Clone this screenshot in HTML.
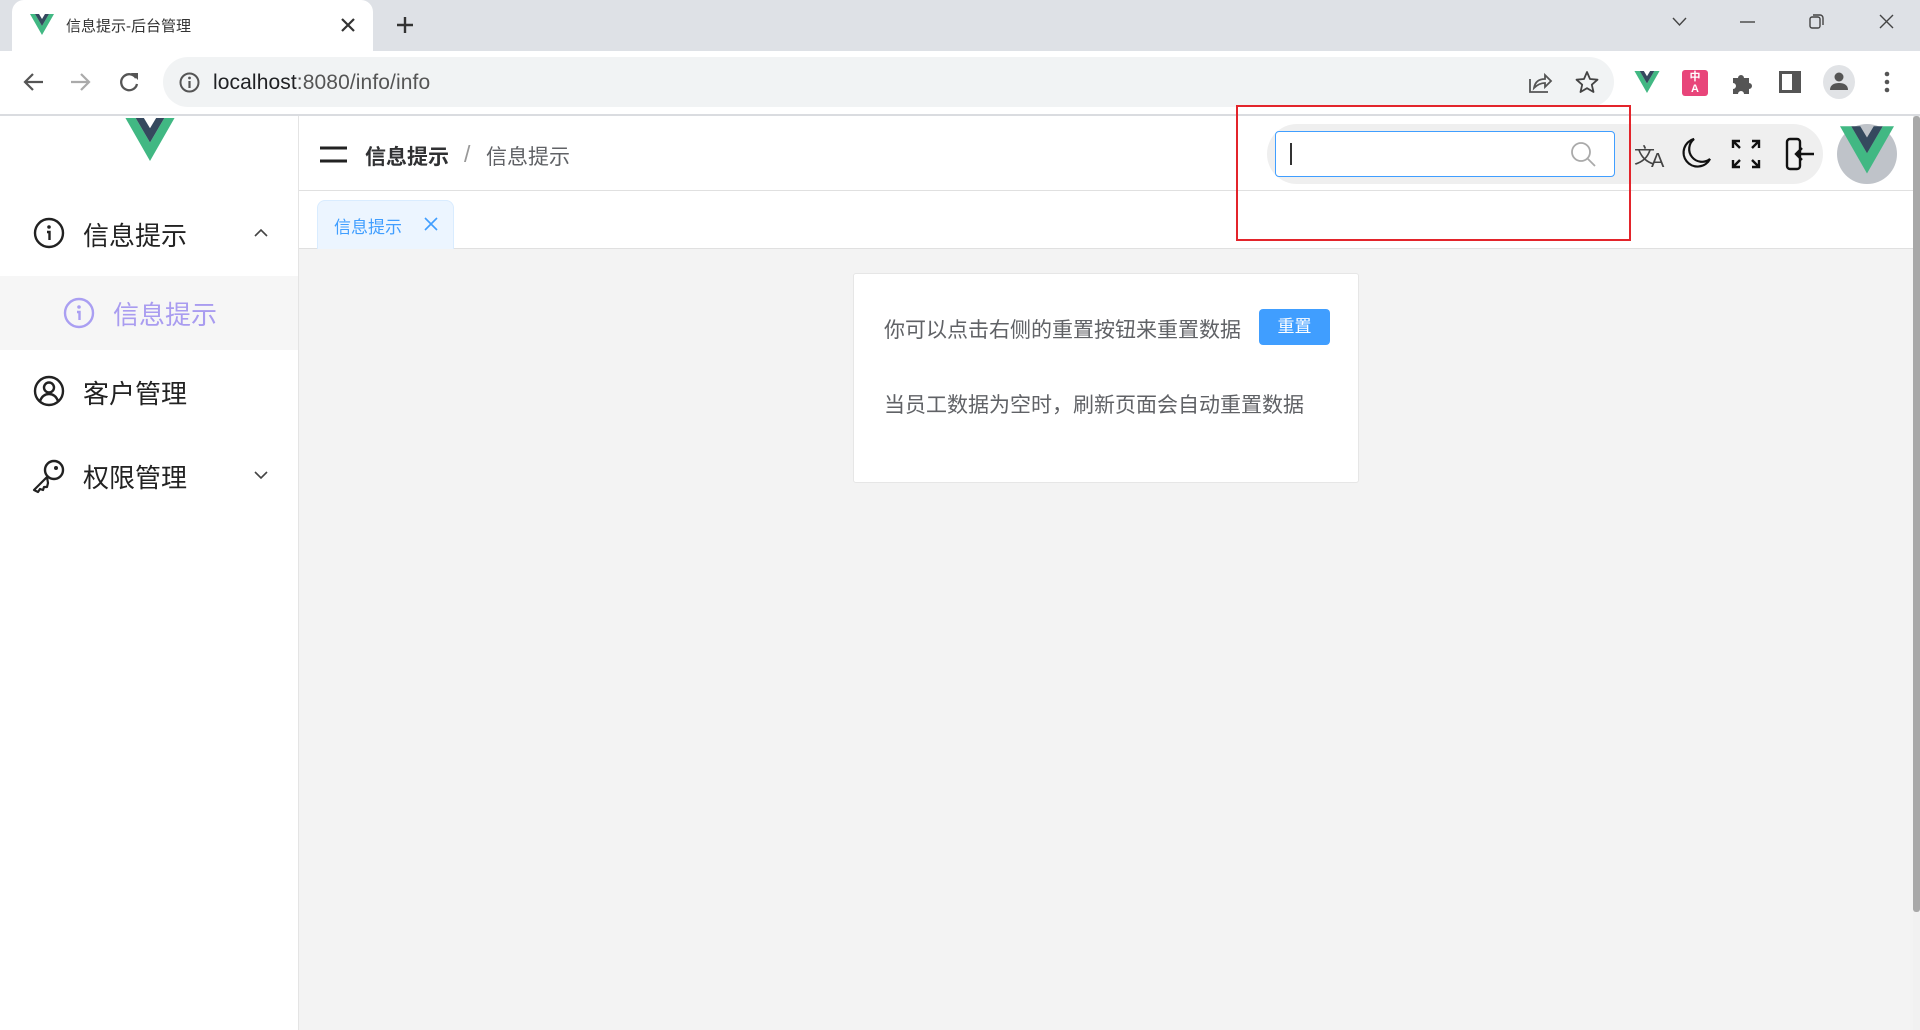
<!DOCTYPE html>
<html><head><meta charset="utf-8"><style>
*{margin:0;padding:0;box-sizing:border-box}
body{width:1920px;height:1030px;overflow:hidden;font-family:"Liberation Sans","Noto Sans CJK SC",sans-serif;background:#fff;position:relative}
.a{position:absolute}
svg{position:absolute;overflow:visible}
</style></head><body>
<div class="a" style="left:0;top:0;width:1920px;height:51px;background:#dee1e6"></div>
<div class="a" style="left:12px;top:0;width:361px;height:52px;background:#fff;border-radius:12px 12px 0 0"></div>
<svg style="left:30px;top:14px" width="24" height="22" viewBox="0 0 24 22"><path d="M0 0h5l7 12 7-12h5L12 21z" fill="#41b883"/><path d="M5 0h4l3 5 3-5h4l-7 12z" fill="#35495e"/></svg>
<div class="a" style="left:66px;top:15px;font-size:15px;color:#333">信息提示-后台管理</div>
<svg style="left:341px;top:18px" width="14" height="14"><path d="M1 1l12 12M13 1L1 13" stroke="#333" stroke-width="2.2"/></svg>
<svg style="left:396px;top:16px" width="18" height="18"><path d="M9 1v16M1 9h16" stroke="#333" stroke-width="2.4"/></svg>
<svg style="left:1672px;top:17px" width="15" height="9"><path d="M1 1l6.5 7L14 1" stroke="#444" fill="none" stroke-width="1.4"/></svg>
<svg style="left:1740px;top:21px" width="15" height="2"><path d="M0 1h15" stroke="#444" stroke-width="1.4"/></svg>
<svg style="left:1809px;top:14px" width="15" height="15"><rect x="1" y="3" width="10" height="11" rx="2" fill="none" stroke="#444" stroke-width="1.4"/><path d="M4 1h7a3 3 0 0 1 3 3v7" fill="none" stroke="#444" stroke-width="1.4"/></svg>
<svg style="left:1879px;top:14px" width="15" height="15"><path d="M1 1l13 13M14 1L1 14" stroke="#444" stroke-width="1.4"/></svg>
<svg style="left:22px;top:72px" width="22" height="20"><path d="M21 10H3M11 2l-8 8 8 8" stroke="#555" fill="none" stroke-width="2.2"/></svg>
<svg style="left:70px;top:72px" width="22" height="20"><path d="M1 10h18M11 2l8 8-8 8" stroke="#aaa" fill="none" stroke-width="2.2"/></svg>
<svg style="left:118px;top:71px" width="22" height="22"><path d="M18 7A8 8 0 1 0 19 13" stroke="#555" fill="none" stroke-width="2.3"/><path d="M13 2h7v7z" fill="#555"/></svg>
<div class="a" style="left:163px;top:57px;width:1451px;height:50px;background:#f1f3f4;border-radius:25px"></div>
<svg style="left:179px;top:72px" width="21" height="21"><circle cx="10.5" cy="10.5" r="9" fill="none" stroke="#555" stroke-width="2"/><path d="M10.5 9v7" stroke="#555" stroke-width="2.2"/><circle cx="10.5" cy="6" r="1.4" fill="#555"/></svg>
<div class="a" style="left:213px;top:71px;font-size:21px;color:#202124;letter-spacing:0.1px">localhost<span style="color:#555">:8080/info/info</span></div>
<svg style="left:1528px;top:71px" width="24" height="22"><path d="M2 8v13h18" stroke="#555" fill="none" stroke-width="1.8"/><path d="M6 17c1-6 5-9 11-9V4l6 6-6 6v-4c-5 0-8 2-11 5z" stroke="#555" fill="none" stroke-width="1.8"/></svg>
<svg style="left:1576px;top:71px" width="22" height="22"><path d="M11 1l3 7 7.5.7-5.7 5 1.7 7.3L11 17.2 4.5 21l1.7-7.3L.5 8.7 8 8z" stroke="#444" fill="none" stroke-width="1.8" stroke-linejoin="round"/></svg>
<svg style="left:1634px;top:71px" width="26" height="23" viewBox="0 0 24 22"><path d="M0 0h5l7 12 7-12h5L12 21z" fill="#41b883"/><path d="M5 0h4l3 5 3-5h4l-7 12z" fill="#35495e"/></svg>
<div class="a" style="left:1682px;top:70px;width:26px;height:26px;background:#e8457a;border-radius:3px;color:#fff;font-size:11px;line-height:12px;text-align:center;font-weight:bold;padding-top:1px">中<br>A</div>
<svg style="left:1730px;top:71px" width="24" height="24"><path d="M3 7h5a3 3 0 1 1 6 0h5v5a3 3 0 1 1 0 6v5h-5a3 3 0 1 0-6 0H3v-5a3 3 0 1 0 0-6z" fill="#555"/></svg>
<svg style="left:1779px;top:71px" width="22" height="22"><rect x="1.5" y="1.5" width="19" height="19" fill="none" stroke="#555" stroke-width="3"/><rect x="13" y="1" width="8" height="20" fill="#555"/></svg>
<div class="a" style="left:1823px;top:65px;width:32px;height:34px;border-radius:50%;background:#e1e3e6"></div>
<svg style="left:1829px;top:71px" width="20" height="20"><circle cx="10" cy="6" r="4.5" fill="#555"/><path d="M1 19c0-5 4-7 9-7s9 2 9 7z" fill="#555"/></svg>
<svg style="left:1884px;top:71px" width="6" height="22"><circle cx="3" cy="3" r="2.3" fill="#555"/><circle cx="3" cy="11" r="2.3" fill="#555"/><circle cx="3" cy="19" r="2.3" fill="#555"/></svg>
<div class="a" style="left:0;top:114px;width:1920px;height:2px;background:#dadce0"></div>
<div class="a" style="left:298px;top:116px;width:1px;height:914px;background:#e4e4e4"></div>
<svg style="left:125px;top:118px" width="50" height="45" viewBox="0 0 24 22"><path d="M0 0h5l7 12 7-12h5L12 21z" fill="#41b883"/><path d="M5 0h4l3 5 3-5h4l-7 12z" fill="#35495e"/></svg>
<svg style="left:33px;top:217px" width="32" height="32"><circle cx="16" cy="16" r="14" fill="none" stroke="#222" stroke-width="2.4"/><circle cx="16" cy="10" r="1.8" fill="#222"/><path d="M14 15h2.5v8" stroke="#222" fill="none" stroke-width="2.4"/></svg>
<div class="a" style="left:83px;top:216px;font-size:26px;color:#222">信息提示</div>
<svg style="left:254px;top:228px" width="14" height="9"><path d="M1 8l6-6 6 6" stroke="#444" fill="none" stroke-width="1.6"/></svg>
<div class="a" style="left:0;top:276px;width:298px;height:74px;background:#f6f6f6"></div>
<svg style="left:63px;top:297px" width="32" height="32"><circle cx="16" cy="16" r="14" fill="none" stroke="#aa9ff2" stroke-width="2.4"/><circle cx="16" cy="10" r="1.8" fill="#aa9ff2"/><path d="M14 15h2.5v8" stroke="#aa9ff2" fill="none" stroke-width="2.4"/></svg>
<div class="a" style="left:113px;top:295px;font-size:26px;color:#a99cf0">信息提示</div>
<svg style="left:33px;top:375px" width="32" height="32"><circle cx="16" cy="16" r="14" fill="none" stroke="#222" stroke-width="2.4"/><circle cx="16" cy="12.5" r="5" fill="none" stroke="#222" stroke-width="2.4"/><path d="M7 26c2-5 5-7 9-7s7 2 9 7" fill="none" stroke="#222" stroke-width="2.4"/></svg>
<div class="a" style="left:83px;top:374px;font-size:26px;color:#222">客户管理</div>
<svg style="left:31px;top:458px" width="36" height="36"><circle cx="23" cy="12" r="9" fill="none" stroke="#222" stroke-width="2.4"/><circle cx="25" cy="10" r="2" fill="#222"/><path d="M16 19L3 32l4 2 2-3 3 1 1-3 3 0 1-4z" fill="none" stroke="#222" stroke-width="2.2" stroke-linejoin="round"/></svg>
<div class="a" style="left:83px;top:458px;font-size:26px;color:#222">权限管理</div>
<svg style="left:254px;top:471px" width="14" height="9"><path d="M1 1l6 6 6-6" stroke="#444" fill="none" stroke-width="1.6"/></svg>
<div class="a" style="left:299px;top:190px;width:1614px;height:1px;background:#e0e0e0"></div>
<svg style="left:320px;top:146px" width="27" height="17"><path d="M0 2h27M0 15h27" stroke="#222" stroke-width="3"/></svg>
<div class="a" style="left:365px;top:141px;font-size:21px;font-weight:bold;color:#303133">信息提示</div>
<div class="a" style="left:464px;top:141px;font-size:23px;color:#999">/</div>
<div class="a" style="left:486px;top:141px;font-size:21px;color:#606266">信息提示</div>
<div class="a" style="left:1267px;top:124px;width:556px;height:60px;background:#efefef;border-radius:30px"></div>
<div class="a" style="left:1275px;top:131px;width:340px;height:46px;background:#fff;border:1.5px solid #409eff;border-radius:4px"></div>
<div class="a" style="left:1290px;top:143px;width:2px;height:22px;background:#333"></div>
<svg style="left:1570px;top:141px" width="26" height="26"><circle cx="11" cy="11" r="9" fill="none" stroke="#aaa" stroke-width="1.8"/><path d="M17.5 17.5L25 25" stroke="#aaa" stroke-width="1.8"/></svg>
<div class="a" style="left:1634px;top:140px;font-size:21px;color:#444;letter-spacing:-4px">文<span style="font-size:20px;position:relative;top:4px">A</span></div>
<svg style="left:1682px;top:137px" width="30" height="32"><path d="M12 2A14 14 0 1 0 28 22 11 11 0 0 1 12 2z" fill="none" stroke="#111" stroke-width="2.2"/></svg>
<svg style="left:1731px;top:139px" width="30" height="30"><path d="M2 9V2h7M2 2l7 7M21 2h7v7M28 2l-7 7M2 21v7h7M2 28l7-7M28 21v7h-7M28 28l-7-7" stroke="#111" fill="none" stroke-width="2.4"/></svg>
<svg style="left:1785px;top:138px" width="30" height="32"><rect x="2" y="1" width="13" height="30" rx="3" fill="none" stroke="#111" stroke-width="2.4"/><path d="M29 16H11M17 10l-6 6 6 6" stroke="#111" fill="none" stroke-width="2.4"/></svg>
<div class="a" style="left:1837px;top:124px;width:60px;height:60px;border-radius:50%;background:#bfc3c9;overflow:hidden"></div>
<svg style="left:1840px;top:124px" width="54" height="54" viewBox="0 0 24 22"><path d="M0 0h5l7 12 7-12h5L12 21z" fill="#41b883"/><path d="M5 0h4l3 5 3-5h4l-7 12z" fill="#35495e"/></svg>
<div class="a" style="left:299px;top:248px;width:1614px;height:782px;background:#f3f3f3;border-top:1px solid #e0e0e0"></div>
<div class="a" style="left:317px;top:200px;width:137px;height:49px;background:#ecf5ff;border:1px solid #d9ecff;border-bottom:none;border-radius:8px 8px 0 0"></div>
<div class="a" style="left:334px;top:213px;font-size:17px;color:#409eff">信息提示</div>
<svg style="left:424px;top:217px" width="14" height="14"><path d="M1 1l12 12M13 1L1 13" stroke="#409eff" stroke-width="1.6"/></svg>
<div class="a" style="left:853px;top:273px;width:506px;height:210px;background:#fff;border:1px solid #e6e6e6;border-radius:3px"></div>
<div class="a" style="left:884px;top:314px;font-size:21px;color:#606266">你可以点击右侧的重置按钮来重置数据</div>
<div class="a" style="left:1259px;top:309px;width:71px;height:36px;background:#409eff;border-radius:4px;color:#fff;font-size:17px;line-height:36px;text-align:center">重置</div>
<div class="a" style="left:884px;top:389px;font-size:21px;color:#606266">当员工数据为空时，刷新页面会自动重置数据</div>
<div class="a" style="left:1236px;top:105px;width:395px;height:136px;border:2px solid #e3242b"></div>
<div class="a" style="left:1913px;top:116px;width:7px;height:914px;background:#f1f1f1"></div>
<div class="a" style="left:1913px;top:116px;width:7px;height:796px;background:#a8a8a8;border-radius:3px"></div>
</body></html>
